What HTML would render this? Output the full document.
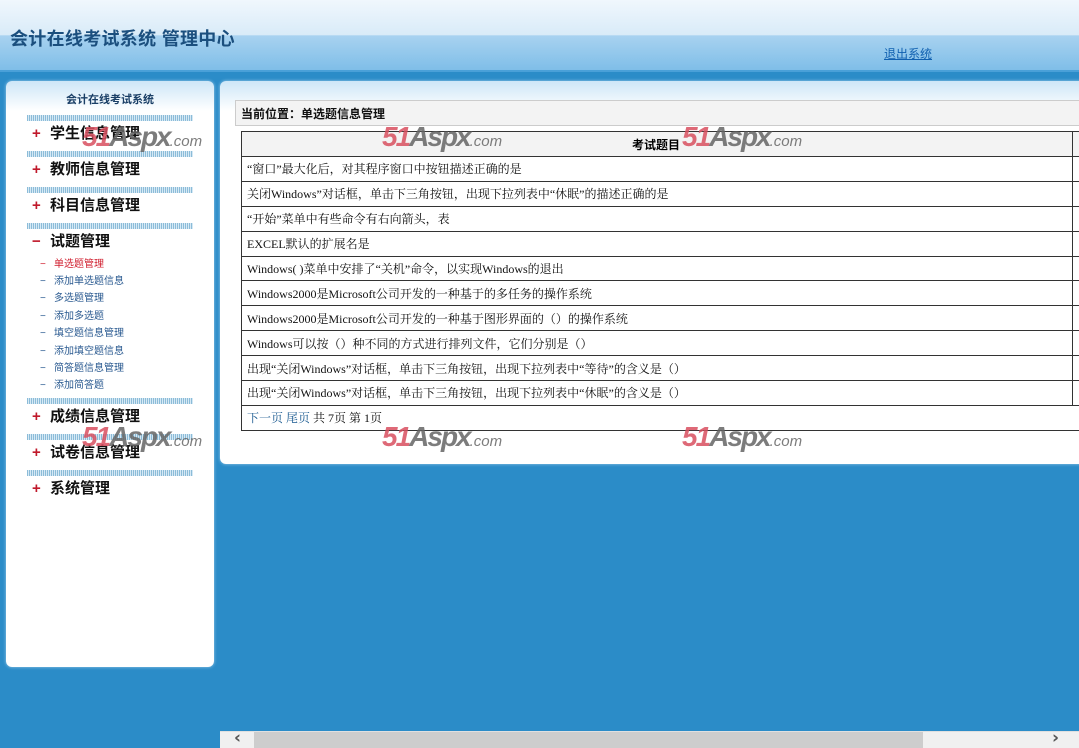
<!DOCTYPE html>
<html><head><meta charset="utf-8"><style>
*{margin:0;padding:0;box-sizing:border-box}
body{width:1079px;height:748px;overflow:hidden;background:#2b8cc8;font-family:"Liberation Serif","Noto Serif CJK SC","Noto Sans CJK SC",serif;position:relative}
.a{position:absolute}
#hd{left:0;top:0;width:1079px;height:72px;background:linear-gradient(#f0f7fd,#d9ebf8 50%,#a8d2f0 51%,#7fbee8);border-bottom:2px solid #4aa0d8}
#hd h1{position:absolute;left:10px;top:25px;font:bold 18px "Liberation Sans","Noto Sans CJK SC",sans-serif;color:#1b4f7e;letter-spacing:0.3px}
#hd a{position:absolute;left:884px;top:45px;font:12px "Liberation Sans","Noto Sans CJK SC",sans-serif;color:#1060b0;text-decoration:underline}
.pn{background:linear-gradient(#cde6f7,#fff 30px);border-radius:6px;box-shadow:0 0 3px #9ccbe9}
.bar{left:27px;width:166px;height:6px;background:repeating-linear-gradient(90deg,#8cbcd8 0 1px,#d6e9f5 1px 2px)}
.it{left:32px;font:bold 15px "Liberation Sans","Noto Sans CJK SC",sans-serif;color:#111;line-height:18px}
.it b{color:#c0192b;display:inline-block;width:18px}
.sb{left:40px;font:10px "Liberation Sans","Noto Sans CJK SC",sans-serif;color:#2a5a90;line-height:12px}
.sb i{font-style:normal;display:inline-block;width:14px}
table{position:absolute;left:241px;top:131px;width:850px;border-collapse:collapse;font-size:12px}
td{border:1px solid #333;height:24.9px;padding:0 5px;color:#111}
th{border:1px solid #333;height:25px;background:#f3f3f3;font:bold 12px "Liberation Sans","Noto Sans CJK SC",sans-serif;text-align:left;padding-left:390px}
.wm{position:absolute;font:italic bold 28px "Liberation Sans",sans-serif;color:#d95060;letter-spacing:-2px;opacity:.85;line-height:28px}
.wm span{color:#666}.wm small{font:italic 15px "Liberation Sans",sans-serif;color:#666;letter-spacing:0}
</style></head><body>
<div id="hd" class="a"><h1>会计在线考试系统 管理中心</h1><a>退出系统</a></div>

<div class="a pn" style="left:6px;top:81px;width:208px;height:586px"></div>
<div class="a" style="left:6px;top:91px;width:208px;text-align:center;font:bold 11px 'Liberation Sans','Noto Sans CJK SC',sans-serif;color:#1a3f66">会计在线考试系统</div>
<div class="a bar" style="top:115px"></div>
<div class="a it" style="top:125px"><b>+</b>学生信息管理</div>
<div class="a bar" style="top:151px"></div>
<div class="a it" style="top:161px"><b>+</b>教师信息管理</div>
<div class="a bar" style="top:187px"></div>
<div class="a it" style="top:197px"><b>+</b>科目信息管理</div>
<div class="a bar" style="top:223px"></div>
<div class="a it" style="top:233px"><b>−</b>试题管理</div>
<div class="a sb" style="top:259px;color:#d02030"><i>−</i>单选题管理</div>
<div class="a sb" style="top:276px"><i>−</i>添加单选题信息</div>
<div class="a sb" style="top:293px"><i>−</i>多选题管理</div>
<div class="a sb" style="top:311px"><i>−</i>添加多选题</div>
<div class="a sb" style="top:328px"><i>−</i>填空题信息管理</div>
<div class="a sb" style="top:346px"><i>−</i>添加填空题信息</div>
<div class="a sb" style="top:363px"><i>−</i>简答题信息管理</div>
<div class="a sb" style="top:380px"><i>−</i>添加简答题</div>
<div class="a bar" style="top:398px"></div>
<div class="a it" style="top:408px"><b>+</b>成绩信息管理</div>
<div class="a bar" style="top:434px"></div>
<div class="a it" style="top:444px"><b>+</b>试卷信息管理</div>
<div class="a bar" style="top:470px"></div>
<div class="a it" style="top:480px"><b>+</b>系统管理</div>

<div class="a pn" style="left:220px;top:81px;width:870px;height:383px"></div>
<div class="a" style="left:235px;top:100px;width:860px;height:26px;background:#f3f3f3;border:1px solid #ccc;font:bold 12px 'Liberation Sans','Noto Sans CJK SC',sans-serif;padding:4px 0 0 5px;color:#111">当前位置：单选题信息管理</div>
<table>
<tr><th>考试题目</th><th style="width:18px;padding:0"></th></tr>
<tr><td>“窗口”最大化后，对其程序窗口中按钮描述正确的是</td><td></td></tr>
<tr><td>关闭Windows”对话框，单击下三角按钮，出现下拉列表中“休眠”的描述正确的是</td><td></td></tr>
<tr><td>“开始”菜单中有些命令有右向箭头，表</td><td></td></tr>
<tr><td>EXCEL默认的扩展名是</td><td></td></tr>
<tr><td>Windows( )菜单中安排了“关机”命令，以实现Windows的退出</td><td></td></tr>
<tr><td>Windows2000是Microsoft公司开发的一种基于的多任务的操作系统</td><td></td></tr>
<tr><td>Windows2000是Microsoft公司开发的一种基于图形界面的（）的操作系统</td><td></td></tr>
<tr><td>Windows可以按（）种不同的方式进行排列文件，它们分别是（）</td><td></td></tr>
<tr><td>出现“关闭Windows”对话框，单击下三角按钮，出现下拉列表中“等待”的含义是（）</td><td></td></tr>
<tr><td>出现“关闭Windows”对话框，单击下三角按钮，出现下拉列表中“休眠”的含义是（）</td><td></td></tr>
<tr><td colspan="2"><span style="color:#1a5a90">下一页 尾页</span> 共 7页 第 1页</td></tr>
</table>

<div class="wm" style="left:82px;top:123px">51<span>Aspx</span><small>.com</small></div>
<div class="wm" style="left:382px;top:123px">51<span>Aspx</span><small>.com</small></div>
<div class="wm" style="left:682px;top:123px">51<span>Aspx</span><small>.com</small></div>
<div class="wm" style="left:82px;top:423px">51<span>Aspx</span><small>.com</small></div>
<div class="wm" style="left:382px;top:423px">51<span>Aspx</span><small>.com</small></div>
<div class="wm" style="left:682px;top:423px">51<span>Aspx</span><small>.com</small></div>

<div class="a" style="left:220px;top:731px;width:859px;height:17px;background:#f0f0f0;border-top:1px solid #e0e0e0"></div>
<div class="a" style="left:254px;top:732px;width:669px;height:16px;background:#cdcdcd"></div>
<div class="a" style="left:234px;top:728px;font:bold 17px 'DejaVu Sans',sans-serif;color:#555">‹</div>
<div class="a" style="left:1052px;top:728px;font:bold 17px 'DejaVu Sans',sans-serif;color:#555">›</div>
</body></html>
